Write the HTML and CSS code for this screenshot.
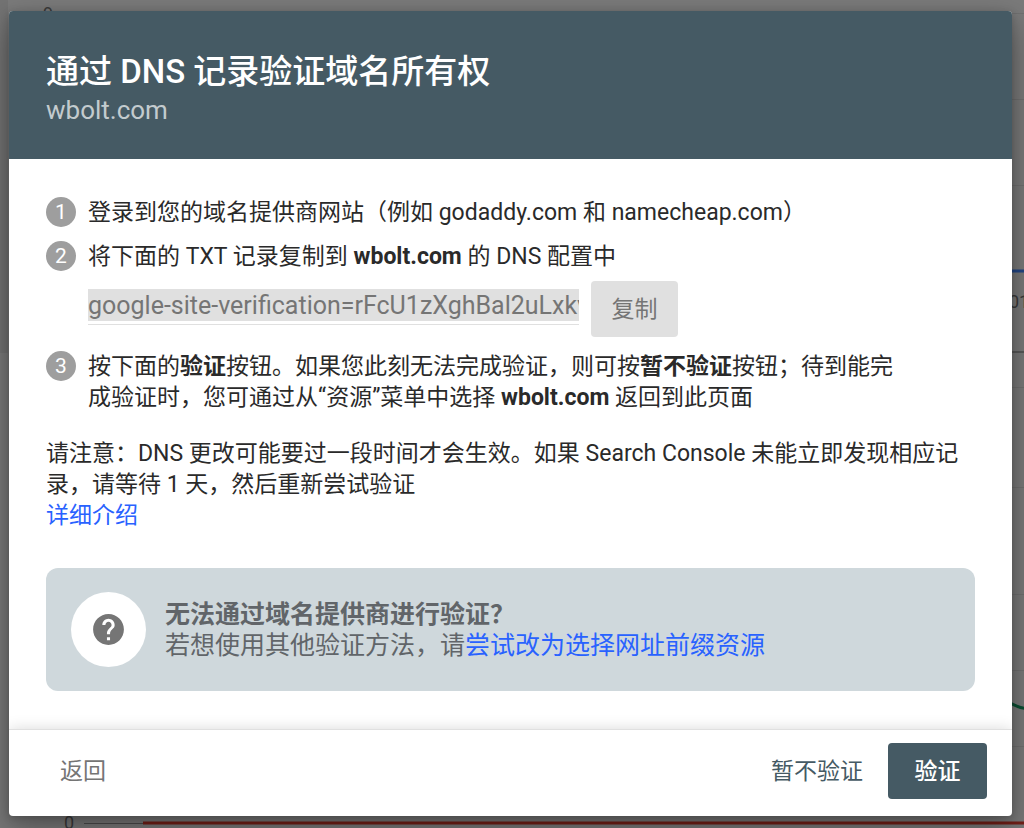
FILE: index.html
```html
<!DOCTYPE html>
<html lang="zh-CN">

<head>
	<meta charset="UTF-8">
	<meta name="viewport" content="width=device-width, initial-scale=1.0">
	<title>通过 DNS 记录验证域名所有权</title>
	<link rel="stylesheet" href="styles.css">
</head>

<body>
	<!--遮罩后的图表-->
	<svg class="backdrop" viewBox="0 0 1024 828" preserveAspectRatio="xMaxYMin slice" aria-hidden="true">
		<rect width="8" height="353" fill="#747474" />
		<path d="M980 13.5h44M980 99.5h44M980 185.5h44M980 387.5h44M980 487.5h44M980 594.5h44M980 670.5h44M980 746.5h44" stroke="#717171" />
		<path d="M980 271h44" stroke="#234787" stroke-width="3" />
		<path d="M980 352h44" stroke="#595959" stroke-width="2" />
		<path d="M1000 697q18 12 30 12" fill="none" stroke="#0b4f33" stroke-width="3" />
		<path d="M84 823.5h60" stroke="#4d4d4d" />
		<path d="M143 823h881" stroke="#762018" stroke-width="3" />
		<g class="backdrop__label">
			<text x="43" y="20">9</text>
			<text x="1009" y="308">01</text>
			<text x="64" y="829">0</text>
		</g>
	</svg>

	<div class="dialog" role="dialog" aria-labelledby="dialog-title">
		<div class="dialog__header">
			<h1 class="dialog__title" id="dialog-title">通过 DNS 记录验证域名所有权</h1>
			<div class="dialog__domain">wbolt.com</div>
		</div>

		<div class="dialog__body">
			<!--验证步骤-->
			<ol class="steps">
				<li class="step">登录到您的域名提供商网站（例如 godaddy.com 和 namecheap.com）</li>
				<li class="step">
					<label for="record">将下面的 TXT 记录复制到 <b>wbolt.com</b> 的 DNS 配置中</label>
					<div class="record">
						<div class="record__field">
							<input class="record__input" id="record" type="text" readonly value="google-site-verification=rFcU1zXghBal2uLxkvQ">
						</div>
						<button class="btn btn--copy" type="button">复制</button>
					</div>
				</li>
				<li class="step">按下面的<b>验证</b>按钮。如果您此刻无法完成验证，则可按<b>暂不验证</b>按钮；待到能完成验证时，您可通过从“资源”菜单中选择 <b>wbolt.com</b> 返回到此页面</li>
			</ol>

			<p class="note">请注意：DNS 更改可能要过一段时间才会生效。如果 Search Console 未能立即发现相应记录，请等待 1 天，然后重新尝试验证<br><a href="#">详细介绍</a></p>

			<!--其他验证方法-->
			<div class="tip">
				<div class="tip__icon">
					<svg viewBox="0 0 24 24" width="37" height="37" fill="#757575" aria-hidden="true">
						<path d="M12 2C6.48 2 2 6.48 2 12s4.48 10 10 10 10-4.48 10-10S17.52 2 12 2zm1 17h-2v-2h2v2zm2.07-7.75l-.9.92C13.45 12.9 13 13.5 13 15h-2v-.5c0-1.1.45-2.1 1.17-2.83l1.24-1.26c.37-.36.59-.86.59-1.41 0-1.1-.9-2-2-2s-2 .9-2 2H8c0-2.21 1.79-4 4-4s4 1.79 4 4c0 .88-.36 1.68-.93 2.25z" />
					</svg>
				</div>
				<div class="tip__text">
					<b>无法通过域名提供商进行验证？</b>
					<div>若想使用其他验证方法，请<a href="#">尝试改为选择网址前缀资源</a></div>
				</div>
			</div>
		</div>

		<div class="dialog__footer">
			<button class="btn btn--back" type="button">返回</button>
			<button class="btn btn--later" type="button">暂不验证</button>
			<button class="btn btn--verify" type="button">验证</button>
		</div>
	</div>
</body>

</html>
```

FILE: styles.css
```css
* {
	box-sizing: border-box;
	margin: 0;
	padding: 0;
}

body {
	position: relative;
	min-height: 100vh;
	padding: 11px 12px 11px 9px;
	background: #7b7b7b;
	color: #2a2a2a;
	font: 23px/31px Roboto, "Noto Sans CJK SC", sans-serif;
}

b {
	font-weight: 700;
}

a {
	color: #2962ff;
	text-decoration: none;
}

.backdrop {
	position: absolute;
	top: 0;
	left: 0;
	width: 100%;
	height: 100%;
}

.backdrop__label {
	font-size: 18px;
	fill: #3c3c3c;
}

.dialog {
	position: relative;
	border-radius: 4px;
	background: #fff;
	box-shadow: 0 14px 34px 4px rgba(0, 0, 0, .3), 0 2px 8px rgba(0, 0, 0, .2);
	overflow: hidden;
}

.dialog__header {
	padding: 39px 37px 33px;
	background: #455a64;
}

.dialog__title {
	color: #fff;
	font-size: 33px;
	font-weight: 500;
	line-height: 44px;
}

.dialog__domain {
	color: #c3cbce;
	font-size: 26px;
	line-height: 32px;
}

.dialog__body {
	padding: 38px 37px;
}

.steps {
	list-style: none;
	counter-reset: step;
}

.step {
	position: relative;
	padding: 0 65px 0 42px;
	margin-bottom: 13px;
	counter-increment: step;
}

.step::before {
	content: counter(step);
	position: absolute;
	left: 0;
	top: 0;
	width: 30px;
	height: 30px;
	border-radius: 50%;
	background: #9e9e9e;
	color: #fff;
	font-size: 21px;
	line-height: 30px;
	text-align: center;
}

.record {
	display: flex;
	align-items: flex-start;
	gap: 12px;
	padding-top: 9px;
	margin-bottom: 14px;
}

.record__field {
	width: 491px;
	padding: 8px 0 3px;
	border-bottom: 1px solid #e0e0e0;
}

.record__input {
	display: block;
	width: 100%;
	height: 32px;
	border: 0;
	outline: 0;
	background: #e0e0e0;
	color: #757575;
	font: inherit;
	font-size: 25px;
}

.btn {
	height: 56px;
	border: 0;
	border-radius: 4px;
	background: none;
	font: inherit;
	cursor: pointer;
}

.btn--copy {
	width: 87px;
	background: #e0e0e0;
	color: #757575;
}

.note {
	margin-top: 25px;
}

.tip {
	display: flex;
	align-items: center;
	gap: 19px;
	margin-top: 37px;
	padding: 24px 25px;
	border-radius: 12px;
	background: #cfd8dc;
	color: #616569;
	font-size: 25px;
}

.tip__icon {
	display: flex;
	align-items: center;
	justify-content: center;
	flex: none;
	width: 75px;
	height: 75px;
	border-radius: 50%;
	background: #fff;
}

.dialog__footer {
	position: relative;
	display: flex;
	align-items: center;
	padding: 13px 25px 17px 37px;
	border-top: 1px solid #e0e0e0;
	box-shadow: 0 0 14px rgba(0, 0, 0, .15);
}

.btn--back {
	padding: 0 14px;
	margin-right: auto;
	color: #757575;
}

.btn--later {
	padding: 0 25px;
	color: #455a64;
}

.btn--verify {
	width: 99px;
	background: #455a64;
	color: #fff;
	font-weight: 500;
}
```
